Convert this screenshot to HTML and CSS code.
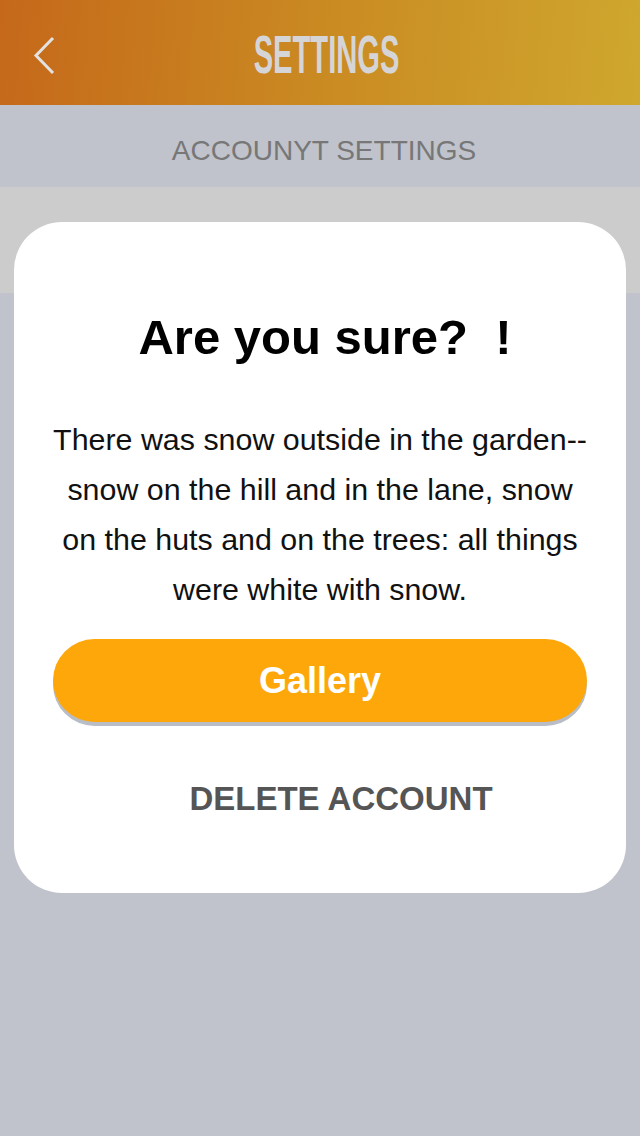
FILE: index.html
```html
<!DOCTYPE html>
<html lang="en">
<head>
    <meta charset="UTF-8">
    <meta name="viewport" content="width=device-width, initial-scale=1.0">
    <title>Settings</title>
    <link rel="stylesheet" href="styles.css">
</head>
<body>
    <header class="topbar">
        <button class="back" aria-label="Back">
            <svg width="24" height="40" viewBox="0 0 24 40">
                <polyline points="20,2 3,19.5 20,37" fill="none" stroke="#e2e2e2" stroke-width="3"/>
            </svg>
        </button>
        <h1 class="title"><span>SETTINGS</span></h1>
    </header>

    <div class="subbar">ACCOUNYT SETTINGS</div>
    <div class="row"></div>

    <!-- Finestra di conferma -->
    <div class="modal">
        <h2 class="modal-title">Are you sure?&nbsp; !</h2>
        <p class="modal-text">There was snow outside in the garden--<br>snow on the hill and in the lane, snow<br>on the huts and on the trees: all things<br>were white with snow.</p>
        <button class="btn-gallery">Gallery</button>
        <button class="btn-delete">DELETE ACCOUNT</button>
    </div>
</body>
</html>
```

FILE: styles.css
```css
/* Stile generale */
body {
    margin: 0;
    min-height: 1136px;
    background-color: #c0c3cb;
    font-family: "Liberation Sans", Arial, sans-serif;
}

/* Barra in alto */
.topbar {
    position: relative;
    height: 105px;
    display: flex;
    align-items: center;
    justify-content: center;
    background: linear-gradient(95deg, #c5681a 0%, #ca8a22 50%, #cfa72e 100%);
}

.back {
    position: absolute;
    left: 33px;
    top: 36px;
    padding: 0;
    border: none;
    background: none;
    cursor: pointer;
}

.back svg {
    display: block;
}

.title {
    margin: 0 0 0 14px;
    font-size: 53px;
    font-weight: bold;
    color: #d5d5d8;
    line-height: 1;
}

.title span {
    display: inline-block;
    transform: scaleX(0.55);
    padding-top: 4px;
}

.subbar {
    height: 82px;
    box-sizing: border-box;
    padding: 9px 0 0 8px;
    display: flex;
    align-items: center;
    justify-content: center;
    font-size: 28px;
    color: #777;
    background-color: #c0c3cb;
}

.row {
    height: 106px;
    background-color: #cccccc;
}

/* Finestra di conferma */
.modal {
    position: absolute;
    top: 222px;
    left: 14px;
    width: 612px;
    height: 671px;
    box-sizing: border-box;
    padding-top: 87px;
    background-color: #fff;
    border-radius: 48px;
    display: flex;
    flex-direction: column;
    align-items: center;
    text-align: center;
}

.modal-title {
    margin: 0;
    padding-left: 10px;
    font-size: 49px;
    line-height: 56px;
    font-weight: bold;
    color: #000;
}

.modal-text {
    margin: 49px 0 0;
    font-size: 30.4px;
    line-height: 50px;
    color: #111;
}

.btn-gallery {
    margin-top: 25px;
    width: 534px;
    height: 83px;
    border: none;
    border-radius: 42px;
    background-color: #fda70b;
    box-shadow: 0 4px 0 #b9bdc6;
    color: #fff;
    font-family: inherit;
    font-size: 36px;
    font-weight: bold;
    cursor: pointer;
}

.btn-delete {
    margin-top: 57px;
    padding: 0 0 0 42px;
    border: none;
    background: none;
    font-family: inherit;
    font-size: 33px;
    line-height: 40px;
    font-weight: bold;
    color: #555;
    cursor: pointer;
}
```
